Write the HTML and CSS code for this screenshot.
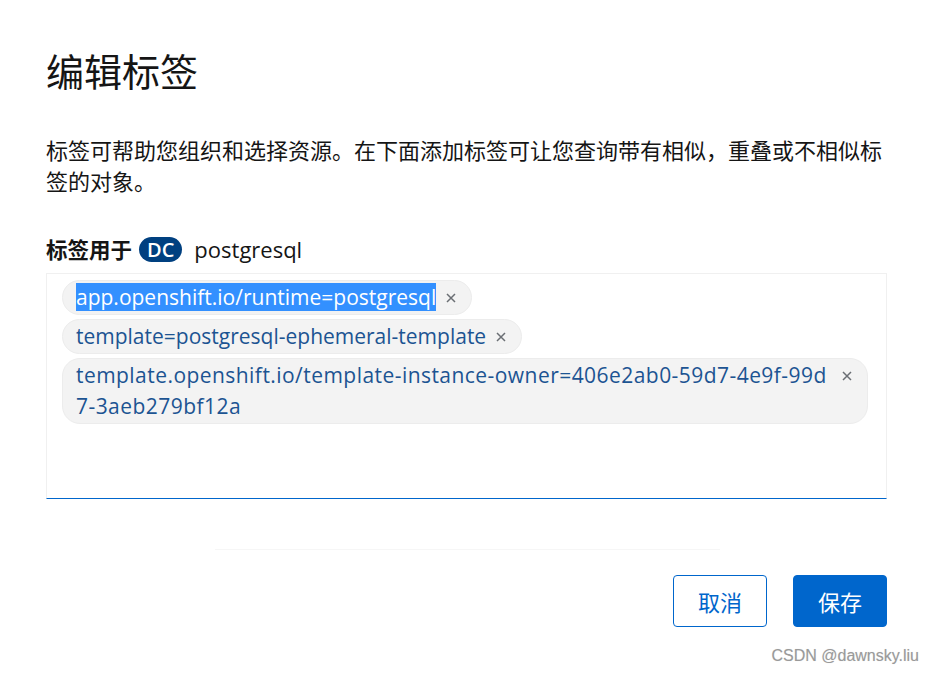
FILE: index.html
```html
<!DOCTYPE html>
<html lang="zh-CN">
<head>
<meta charset="utf-8">
<title>编辑标签</title>
<link rel="stylesheet" href="styles.css">
</head>
<body>
<div class="modal">
  <h1 class="title">编辑标签</h1>
  <p class="desc">标签可帮助您组织和选择资源。在下面添加标签可让您查询带有相似，重叠或不相似标签的对象。</p>
  <div class="for">
    <span class="for-label">标签用于</span>
    <span class="badge">DC</span>
    <span class="res-name">postgresql</span>
  </div>
  <div class="tags-box">
    <div class="chips">
      <span class="chip"><span class="chip-text"><span class="sel">app.openshift.io/runtime=postgresql</span></span><span class="chip-x"><svg viewBox="0 0 10 10" width="10" height="10"><path d="M1 1L9 9M9 1L1 9" stroke="#6a6e73" stroke-width="1.5" fill="none"/></svg></span></span>
      <span class="chip"><span class="chip-text">template=postgresql-ephemeral-template</span><span class="chip-x"><svg viewBox="0 0 10 10" width="10" height="10"><path d="M1 1L9 9M9 1L1 9" stroke="#6a6e73" stroke-width="1.5" fill="none"/></svg></span></span>
      <span class="chip chip-long"><span class="chip-text">template.openshift.io/template-instance-owner=406e2ab0-59d7-4e9f-99d7-3aeb279bf12a</span><span class="chip-x"><svg viewBox="0 0 10 10" width="10" height="10"><path d="M1 1L9 9M9 1L1 9" stroke="#6a6e73" stroke-width="1.5" fill="none"/></svg></span></span>
    </div>
  </div>
  <div class="fade-line"></div>
  <div class="footer">
    <button class="btn btn-secondary">取消</button>
    <button class="btn btn-primary">保存</button>
  </div>
  <div class="watermark">CSDN @dawnsky.liu</div>
</div>
</body>
</html>
```
FILE: styles.css
```css
html, body {
  margin: 0;
  padding: 0;
  background: #ffffff;
}
body {
  font-family: "Open Sans", "Noto Sans CJK SC", sans-serif;
  color: #151515;
  width: 934px;
  height: 676px;
  overflow: hidden;
}
.modal {
  padding: 44px 47px 0 46px;
  display: flex;
  flex-direction: column;
}
.title {
  margin: 0;
  font-size: 38px;
  line-height: 52px;
  font-weight: 400;
  font-family: "Noto Sans CJK SC", sans-serif;
  color: #151515;
}
.desc {
  margin: 38px 0 0 0;
  font-size: 22px;
  line-height: 31px;
  font-family: "Noto Sans CJK SC", sans-serif;
  color: #151515;
}
.for {
  margin-top: 38px;
  display: flex;
  align-items: center;
  height: 30px;
}
.for-label {
  font-family: "Noto Sans CJK SC", sans-serif;
  font-weight: 700;
  font-size: 21.5px;
  line-height: 30px;
  margin-right: 7px;
}
.badge {
  background: #004080;
  color: #ffffff;
  font-family: "Open Sans", sans-serif;
  font-weight: 600;
  font-size: 20px;
  line-height: 25px;
  height: 25px;
  padding: 0 8px;
  border-radius: 13px;
  margin-right: 12px;
}
.res-name {
  font-size: 22px;
  line-height: 30px;
}
.tags-box {
  margin-top: 9px;
  height: 226px;
  border: 1px solid #f0f0f0;
  border-bottom: 1px solid #0066cc;
  padding: 6px 16px 0 15px;
  box-sizing: border-box;
}
.chips {
  display: flex;
  flex-wrap: wrap;
  align-items: flex-start;
  gap: 4px 4px;
}
.chip {
  display: inline-flex;
  align-items: flex-start;
  background: #f3f3f3;
  border: 1px solid #ececec;
  border-radius: 18px;
  padding: 1px 0 1px 13px;
  max-width: 806px;
  box-sizing: border-box;
  color: #1c5492;
  font-size: 21px;
  line-height: 31px;
}
.chip-long {
  width: 806px;
}
.chip-text {
  word-break: break-all;
}
.chip-long .chip-text {
  flex: 1;
  letter-spacing: 0.45px;
}
.sel {
  background: #3390ff;
  color: #ffffff;
}
.chip-x {
  display: flex;
  align-items: center;
  justify-content: center;
  height: 31px;
  padding: 0 15px 0 10px;
  flex: none;
}
.chip-x svg {
  display: block;
}
.fade-line {
  margin: 50px auto 0 169px;
  width: 505px;
  height: 1px;
  background: #f6f6f6;
}
.footer {
  margin-top: 25px;
  display: flex;
  justify-content: flex-end;
  gap: 26px;
}
.btn {
  width: 94px;
  height: 52px;
  border-radius: 4px;
  font-family: "Noto Sans CJK SC", sans-serif;
  font-size: 22px;
  padding: 0;
  box-sizing: border-box;
}
.btn-secondary {
  background: #ffffff;
  color: #0066cc;
  border: 1px solid #0066cc;
}
.btn-primary {
  background: #0066cc;
  color: #ffffff;
  border: 1px solid #0066cc;
}
.watermark {
  align-self: flex-end;
  margin: 19px -32px 0 0;
  font-family: "Liberation Sans", sans-serif;
  font-size: 16px;
  line-height: 20px;
  color: #9a9a9a;
  text-shadow: 0 0 1px rgba(0,0,0,0.15);
}
```
